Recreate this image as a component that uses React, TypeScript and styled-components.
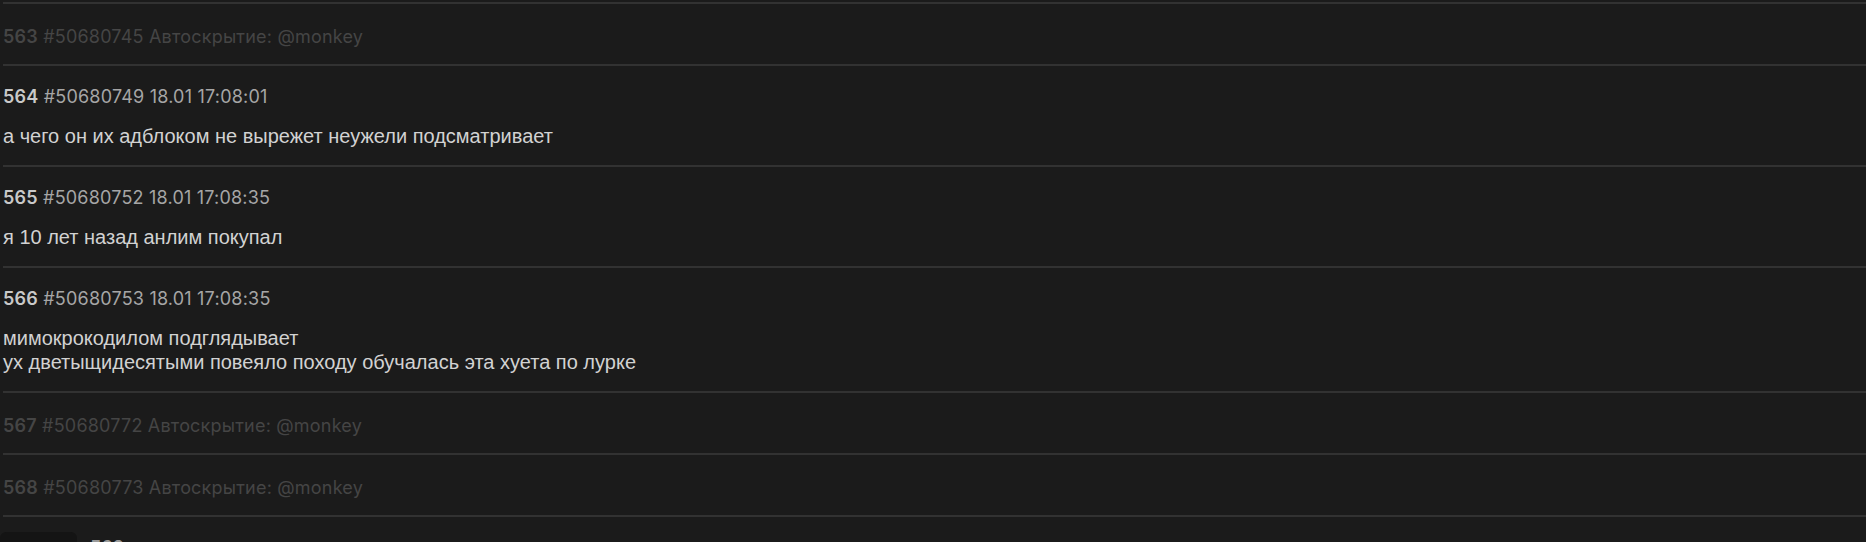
import styled, { createGlobalStyle } from "styled-components";

const GlobalStyle = createGlobalStyle`
    html, body {
        margin: 0;
        padding: 0;
        background-color: #1b1b1b;
        overflow: hidden;
    }
`;

const Thread = styled.div`
    width: 100%;
    height: 542px;
    padding-top: 2px;
    box-sizing: border-box;
    overflow: hidden;
    background-color: #1b1b1b;
`;

const Post = styled.div<{ $hidden?: boolean }>`
    margin-left: 3px;
    border-top: 2px solid #323232;
    padding: ${(p) => (p.$hidden ? "22px 0 17px" : "21px 0 17px")};
    display: flex;
    flex-direction: column;
    gap: 17px;
`;

const Header = styled.div<{ $hidden?: boolean }>`
    font-family: Inter, "Noto Sans", sans-serif;
    font-size: 18px;
    letter-spacing: 0.2px;
    line-height: ${(p) => (p.$hidden ? "21px" : "20px")};
    color: ${(p) => (p.$hidden ? "#454545" : "#a6a6a6")};
    white-space: nowrap;
    b {
        font-weight: 600;
        color: ${(p) => (p.$hidden ? "#454545" : "#c9c9c9")};
    }
`;

const Body = styled.div`
    font-family: "Liberation Sans", Arial, sans-serif;
    font-size: 20px;
    line-height: 24px;
    color: #d2d2d2;
`;

const NextPost = styled.div`
    border-top: 2px solid #323232;
    margin-left: 3px;
    padding-top: 15px;
    display: flex;
    gap: 13px;
`;

const Thumb = styled.div`
    width: 77px;
    height: 40px;
    margin-left: -3px;
    border-radius: 6px 6px 0 0;
    background-color: #141414;
`;

const NextHeader = styled.div`
    font-family: Inter, "Noto Sans", sans-serif;
    font-size: 18px;
    font-weight: 600;
    line-height: 20px;
    padding-top: 6px;
    color: #9a9a9a;
`;

type Item = {
    num: number;
    id: string;
    date?: string;
    lines?: string[];
};

const posts: Item[] = [
    { num: 563, id: "50680745" },
    { num: 564, id: "50680749", date: "18.01 17:08:01", lines: ["а чего он их адблоком не вырежет неужели подсматривает"] },
    { num: 565, id: "50680752", date: "18.01 17:08:35", lines: ["я 10 лет назад анлим покупал"] },
    {
        num: 566,
        id: "50680753",
        date: "18.01 17:08:35",
        lines: ["мимокрокодилом подглядывает", "ух дветыщидесятыми повеяло походу обучалась эта хуета по лурке"],
    },
    { num: 567, id: "50680772" },
    { num: 568, id: "50680773" },
];

export default function App() {
    return (
        <>
            <GlobalStyle />
            <Thread>
                {posts.map((post) =>
                    post.lines ? (
                        <Post key={post.id}>
                            <Header>
                                <b>{post.num}</b> #{post.id} {post.date}
                            </Header>
                            <Body>
                                {post.lines.map((line, i) => (
                                    <div key={i}>{line}</div>
                                ))}
                            </Body>
                        </Post>
                    ) : (
                        // auto-hidden posts only show the header line
                        <Post key={post.id} $hidden>
                            <Header $hidden>
                                <b>{post.num}</b> #{post.id} Автоскрытие: @monkey
                            </Header>
                        </Post>
                    )
                )}
                <NextPost>
                    <Thumb />
                    <NextHeader>569</NextHeader>
                </NextPost>
            </Thread>
        </>
    );
}
